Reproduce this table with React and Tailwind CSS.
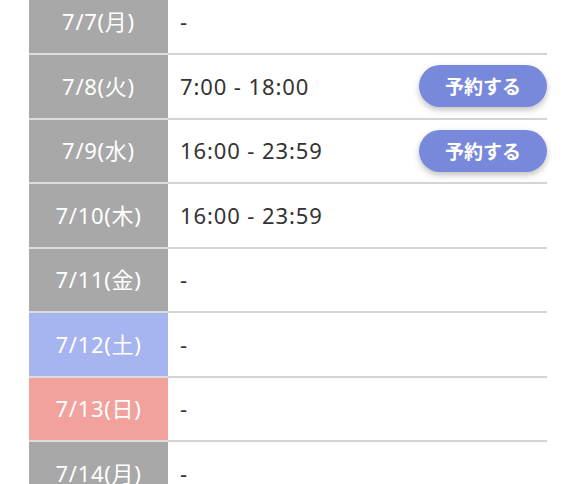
const rows = [
  { date: "7/7(月)", time: "-", tone: "bg-[#a8a8a8]" },
  { date: "7/8(火)", time: "7:00 - 18:00", tone: "bg-[#a8a8a8]", reserve: true },
  { date: "7/9(水)", time: "16:00 - 23:59", tone: "bg-[#a8a8a8]", reserve: true },
  { date: "7/10(木)", time: "16:00 - 23:59", tone: "bg-[#a8a8a8]" },
  { date: "7/11(金)", time: "-", tone: "bg-[#a8a8a8]" },
  { date: "7/12(土)", time: "-", tone: "bg-[#a6b5ef]" },
  { date: "7/13(日)", time: "-", tone: "bg-[#f2a29c]" },
  { date: "7/14(月)", time: "-", tone: "bg-[#a8a8a8]" },
]

const ScheduleRow = ({ row }) => {
  return (
    <div className="flex h-[64.5px] shrink-0">
      <div className={`${row.tone} w-[139px] shrink-0 flex items-center justify-center border-b-2 border-[#dcdcdc] text-white text-[22px] tracking-[0.7px]`}>
        {row.date}
      </div>
      <div className="flex-1 flex items-center justify-between border-b-2 border-[#d4d4d4] pl-[12px] text-[#333] text-[22px] tracking-[0.9px]">
        <span>{row.time}</span>
        {row.reserve && (
          <button
            className="h-[42px] w-[128px] rounded-full bg-[#7889dc] text-white text-[19px] font-bold tracking-normal shadow-[0_3px_6px_rgba(0,0,0,0.25)]"
            style={{ fontFamily: '"Noto Sans CJK JP", sans-serif' }}
          >
            予約する
          </button>
        )}
      </div>
    </div>
  )
}

export default function App() {
  return (
    <section
      className="h-[484px] w-[576px] overflow-hidden bg-white"
      style={{ fontFamily: '"Noto Sans", "Noto Sans CJK JP", sans-serif' }}
    >
      <div className="flex flex-col ml-[29px] w-[518px] -mt-[9.5px]">
        {rows.map((row) => (
          <ScheduleRow key={row.date} row={row} />
        ))}
      </div>
    </section>
  )
}
